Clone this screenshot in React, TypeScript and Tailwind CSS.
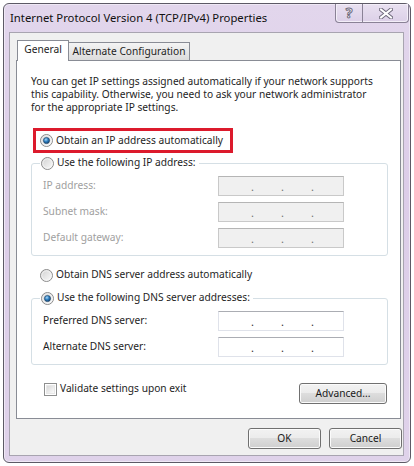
import React from "react";

function Radio({ checked }: { checked?: boolean }) {
  return (
    <svg width="13" height="13" viewBox="0 0 13 13" className="shrink-0">
      <defs>
        <linearGradient id="rgbg" x1="0" y1="0" x2="1" y2="1">
          <stop offset="0" stopColor="#cfcfcf" />
          <stop offset="1" stopColor="#fdfdfd" />
        </linearGradient>
        <radialGradient id="rgdot" cx="0.4" cy="0.35" r="0.75">
          <stop offset="0" stopColor="#a8d8f8" />
          <stop offset="0.45" stopColor="#2f7fc0" />
          <stop offset="1" stopColor="#0c3560" />
        </radialGradient>
      </defs>
      <circle cx="6.5" cy="6.5" r="6" fill="url(#rgbg)" stroke="#8c8c8c" strokeWidth="1" />
      <circle cx="6.5" cy="6.5" r="4.7" fill="none" stroke="#f6f6f6" strokeWidth="0.8" />
      {checked && <circle cx="6.5" cy="6.5" r="3.1" fill="url(#rgdot)" stroke="#1b3f63" strokeWidth="0.6" />}
    </svg>
  );
}

function Checkbox() {
  return (
    <div className="w-[13px] h-[13px] border border-[#8e8f8f] bg-white p-px shrink-0">
      <div className="w-full h-full border border-[#e8e8e8] bg-[linear-gradient(135deg,#d8d8d8,#fbfbfb)]" />
    </div>
  );
}

function IpField({ disabled }: { disabled?: boolean }) {
  return (
    <div
      className={
        disabled
          ? "w-[126px] h-[20px] border border-[#c9c9c9] border-t-[#b5b5b5] bg-[#f0f0f0] flex items-end pb-[3px] text-[#707070] text-[11px] leading-[11px]"
          : "w-[126px] h-[20px] border border-[#dfe2ea] border-t-[#abadb3] bg-white flex items-end pb-[3px] text-[#303030] text-[11px] leading-[11px]"
      }
    >
      <span className="w-[32px]" />
      <span>.</span>
      <span className="w-[27px]" />
      <span>.</span>
      <span className="w-[27px]" />
      <span>.</span>
    </div>
  );
}

function Button({ label, w }: { label: string; w: string }) {
  return (
    <div
      className={
        w +
        " h-[21px] rounded-[3px] border border-[#707070] bg-[linear-gradient(#f2f2f2_0%,#ebebeb_50%,#dddddd_50%,#cfcfcf_100%)] shadow-[inset_0_0_0_1px_#fbfbfb] flex items-center justify-center text-[#1a1a1a]"
      }
    >
      {label}
    </div>
  );
}

export default function App() {
  return (
    <div className="w-[414px] h-[466px] bg-white pt-[3px] pl-[3px] overflow-hidden [font-family:'Noto_Sans',sans-serif] text-[10.2px] text-[#1e1e1e] whitespace-nowrap">
      <div className="w-[408px] h-[460px] rounded-[6px] border border-[#5d5a66] bg-[linear-gradient(180deg,#e2d6ec_0%,#dccde8_40%,#dfd2ea_100%)] shadow-[inset_0_0_0_1px_#efe8f5] flex flex-col">
        {/* Title bar */}
        <div className="h-[28px] flex items-start shrink-0">
          <div className="pl-[6px] pt-[7px] text-[11.3px] leading-[14px] text-[#111]">
            Internet Protocol Version 4 (TCP/IPv4) Properties
          </div>
          <div className="ml-auto mr-px flex h-[19px] rounded-b-[4px] border border-t-0 border-[#8a8296] bg-[linear-gradient(#e9e1f1,#dcd0e8)] shadow-[inset_0_0_0_1px_#f3eef8]">
            <div className="w-[27px] h-full flex items-center justify-center border-r border-[#8a8296] text-[14px] font-bold text-white [-webkit-text-stroke:1px_#6f6a7c] leading-[14px]">
              ?
            </div>
            <div className="w-[45px] h-full flex items-center justify-center">
              <svg width="14" height="11" viewBox="0 0 14 11">
                <path d="M2 1.5 L12 9.5 M12 1.5 L2 9.5" stroke="#6f6a7c" strokeWidth="4" strokeLinecap="square" />
                <path d="M2 1.5 L12 9.5 M12 1.5 L2 9.5" stroke="#ffffff" strokeWidth="2" strokeLinecap="square" />
              </svg>
            </div>
          </div>
        </div>

        {/* Client area */}
        <div className="ml-[5px] w-[395px] h-[424px] border border-[#a8a4b0] bg-[#f0f0f0] flex flex-col pl-[6px] pt-[7px]">
          {/* Tabs */}
          <div className="h-[20px] flex items-end pl-px">
            <div className="relative z-10 w-[52px] h-[21px] -mb-px bg-white border border-b-0 border-[#898c95] flex items-center justify-center pb-[2px]">
              General
            </div>
            <div className="w-[121px] h-[18px] border border-b-0 border-l-0 border-[#898c95] bg-[linear-gradient(#f4f4f4,#dcdcdc)] flex items-center justify-center">
              Alternate Configuration
            </div>
          </div>

          {/* Panel */}
          <div className="w-[385px] h-[359px] border border-[#898c95] bg-white flex flex-col">
            <div className="ml-[14px] mt-[14px] leading-[13px] flex flex-col">
              <span>You can get IP settings assigned automatically if your network supports</span>
              <span>this capability. Otherwise, you need to ask your network administrator</span>
              <span>for the appropriate IP settings.</span>
            </div>

            <div className="ml-[16px] mt-[14px] w-[200px] h-[25px] border-[3px] border-[#dc1a2c] flex items-center pl-[4px] gap-[3px]">
              <Radio checked />
              <span>Obtain an IP address automatically</span>
            </div>

            <fieldset className="ml-[14px] mt-[2px] w-[357px] border border-[#d5dfe5] rounded-[3px] pl-[11px] pb-[7px]">
              <legend className="ml-[-3px] px-px h-[16px] flex items-center gap-[3px] pr-[3px]">
                <Radio />
                <span>Use the following IP address:</span>
              </legend>
              <div className="mt-[5px] flex flex-col gap-[6px] text-[#a0a0a0]">
                <div className="flex items-center">
                  <span className="w-[175px]">IP address:</span>
                  <IpField disabled />
                </div>
                <div className="flex items-center">
                  <span className="w-[175px]">Subnet mask:</span>
                  <IpField disabled />
                </div>
                <div className="flex items-center">
                  <span className="w-[175px]">Default gateway:</span>
                  <IpField disabled />
                </div>
              </div>
            </fieldset>

            <div className="ml-[23px] mt-[11px] h-[16px] flex items-center gap-[3px]">
              <Radio />
              <span>Obtain DNS server address automatically</span>
            </div>

            <fieldset className="ml-[14px] mt-[7px] w-[357px] border border-[#d5dfe5] rounded-[3px] pl-[11px] pb-[7px]">
              <legend className="ml-[-3px] px-px h-[16px] flex items-center gap-[3px] pr-[3px]">
                <Radio checked />
                <span>Use the following DNS server addresses:</span>
              </legend>
              <div className="mt-[5px] flex flex-col gap-[6px]">
                <div className="flex items-center">
                  <span className="w-[175px]">Preferred DNS server:</span>
                  <IpField />
                </div>
                <div className="flex items-center">
                  <span className="w-[175px]">Alternate DNS server:</span>
                  <IpField />
                </div>
              </div>
            </fieldset>

            <div className="mt-[16px] ml-[27px] mr-[13px] flex items-start">
              <div className="h-[16px] flex items-center gap-[3px]">
                <Checkbox />
                <span>Validate settings upon exit</span>
              </div>
              <div className="ml-auto mt-[2px]">
                <Button label="Advanced..." w="w-[88px]" />
              </div>
            </div>
          </div>

          {/* Bottom buttons */}
          <div className="mt-[9px] pr-[1px] flex justify-end gap-[8px]">
            <Button label="OK" w="w-[73px]" />
            <Button label="Cancel" w="w-[73px]" />
          </div>
        </div>
      </div>
    </div>
  );
}
